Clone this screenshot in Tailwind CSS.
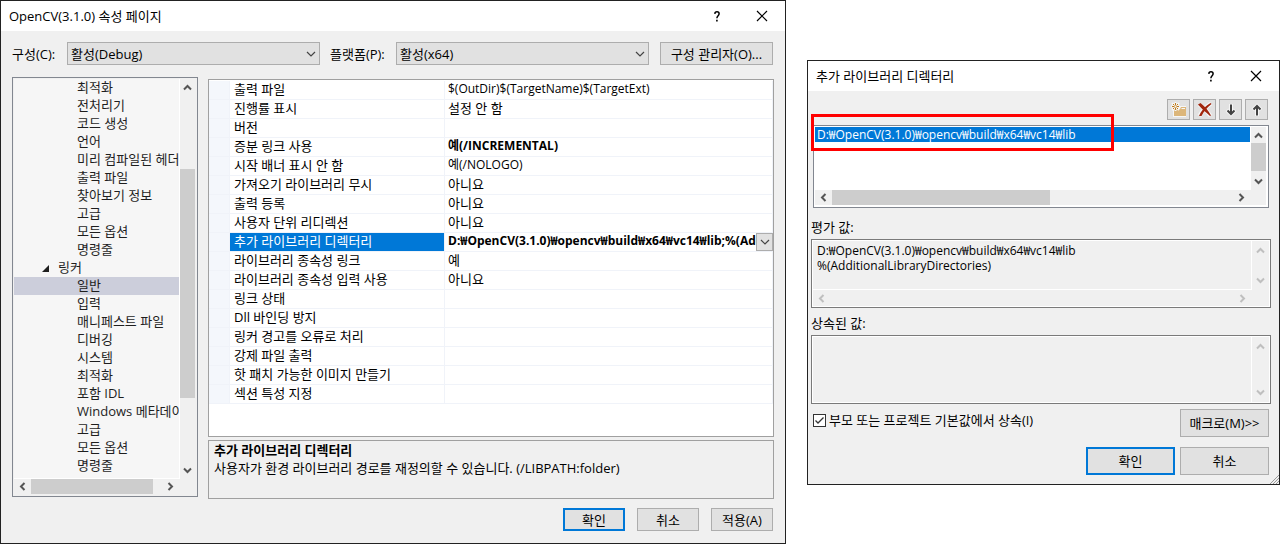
<!DOCTYPE html>
<html lang="ko">
<head>
    <meta charset="UTF-8">
    <meta name="viewport" content="width=device-width, initial-scale=1.0">
    <title>OpenCV(3.1.0) 속성 페이지</title>
    <script src="https://cdn.jsdelivr.net/npm/@tailwindcss/browser@4"></script>
</head>
<body class="bg-white text-black text-[13px] leading-[18px] font-['Open_Sans','Noto_Sans_CJK_KR',sans-serif]">

<!-- Shared icons -->
<svg class="hidden">
    <symbol id="up" viewBox="0 0 9 9"><path d="M1 6.5 4.5 3 8 6.5" fill="none" stroke="currentColor" stroke-width="2"/></symbol>
    <symbol id="down" viewBox="0 0 9 9"><path d="M1 2.5 4.5 6 8 2.5" fill="none" stroke="currentColor" stroke-width="2"/></symbol>
    <symbol id="left" viewBox="0 0 9 9"><path d="M6.5 1 3 4.5 6.5 8" fill="none" stroke="currentColor" stroke-width="2"/></symbol>
    <symbol id="right" viewBox="0 0 9 9"><path d="M2.5 1 6 4.5 2.5 8" fill="none" stroke="currentColor" stroke-width="2"/></symbol>
    <symbol id="chevron" viewBox="0 0 10 6"><path d="M1 1 5 5 9 1" fill="none" stroke="currentColor" stroke-width="1.2"/></symbol>
    <symbol id="close" viewBox="0 0 12 12"><path d="M1 1 11 11M11 1 1 11" fill="none" stroke="currentColor" stroke-width="1.2"/></symbol>
    <symbol id="help" viewBox="0 0 6 11"><path d="M.8 2.9C.9 1.5 1.7.8 3 .8s2.1.8 2.1 2c0 1.9-2.2 2-2.2 4.4" fill="none" stroke="currentColor" stroke-width="1.5"/><path d="M2.1 8.8h1.6v1.6H2.1z" fill="currentColor"/></symbol>
</svg>

<div class="grid grid-cols-[786fr_473fr] gap-[21px] items-start">

    <!-- Property pages window -->
    <main class="border border-[#222] bg-[#f0f0f0] min-w-0">
        <header class="flex items-center h-[30px] bg-white pl-2 pr-[17px]">
            <h1 class="grow">OpenCV(3.1.0) 속성 페이지</h1>
            <button aria-label="도움말" class="mr-[36px]"><svg class="w-[6px] h-[11px]"><use href="#help"/></svg></button>
            <button aria-label="닫기"><svg class="w-3 h-3"><use href="#close"/></svg></button>
        </header>

        <div class="flex items-center pt-[11px] pl-[11px] pr-3">
            <label for="config" class="w-[55px] shrink-0">구성(C):</label>
            <div class="relative flex-1 min-w-0">
                <select id="config" class="appearance-none w-full h-[23px] border border-[#adadad] bg-[#e1e1e1] pl-[3px]">
                    <option>활성(Debug)</option>
                </select>
                <svg class="absolute right-1 top-[9px] w-[10px] h-[6px] text-[#444] pointer-events-none"><use href="#chevron"/></svg>
            </div>
            <label for="platform" class="w-[66px] shrink-0 ml-[10px]">플랫폼(P):</label>
            <div class="relative flex-1 min-w-0">
                <select id="platform" class="appearance-none w-full h-[23px] border border-[#adadad] bg-[#e1e1e1] pl-[3px]">
                    <option>활성(x64)</option>
                </select>
                <svg class="absolute right-1 top-[9px] w-[10px] h-[6px] text-[#444] pointer-events-none"><use href="#chevron"/></svg>
            </div>
            <button class="w-[113px] h-[23px] shrink-0 ml-[11px] border border-[#adadad] bg-[#e1e1e1] leading-[20px]">구성 관리자(O)...</button>
        </div>

        <div class="flex gap-[10px] pt-3 pl-[11px] pr-[11px]">
            <!-- Category tree -->
            <nav class="w-[186px] h-[420px] shrink-0 border border-[#828790] p-px pb-[2px] flex flex-col">
                <div class="flex h-[400px]">
                    <ul class="w-[165px] overflow-hidden whitespace-nowrap bg-[#f6f6f6] text-[#1e1e1e] border-b border-white leading-4 [&>li]:h-[18px]">
                        <li class="pl-[63px]">최적화</li>
                        <li class="pl-[63px]">전처리기</li>
                        <li class="pl-[63px]">코드 생성</li>
                        <li class="pl-[63px]">언어</li>
                        <li class="pl-[63px]">미리 컴파일된 헤더</li>
                        <li class="pl-[63px]">출력 파일</li>
                        <li class="pl-[63px]">찾아보기 정보</li>
                        <li class="pl-[63px]">고급</li>
                        <li class="pl-[63px]">모든 옵션</li>
                        <li class="pl-[63px]">명령줄</li>
                        <li class="flex pl-7"><svg class="w-[7px] h-[7px] mt-[6px] mr-[9px]" viewBox="0 0 7 7"><path d="M7 0v7H0z" fill="#1e1e1e"/></svg>링커</li>
                        <li class="pl-[63px] bg-[#cccedb]">일반</li>
                        <li class="pl-[63px]">입력</li>
                        <li class="pl-[63px]">매니페스트 파일</li>
                        <li class="pl-[63px]">디버깅</li>
                        <li class="pl-[63px]">시스템</li>
                        <li class="pl-[63px]">최적화</li>
                        <li class="pl-[63px]">포함 IDL</li>
                        <li class="pl-[63px]">Windows 메타데이터</li>
                        <li class="pl-[63px]">고급</li>
                        <li class="pl-[63px]">모든 옵션</li>
                        <li class="pl-[63px]">명령줄</li>
                    </ul>
                    <div class="w-[16px] border-l border-white flex flex-col items-center text-[#555]">
                        <svg class="w-[9px] h-[9px] my-1 shrink-0"><use href="#up"/></svg>
                        <div class="w-full h-[229px] mt-[73px] bg-[#cdcdcd]"></div>
                        <svg class="w-[9px] h-[9px] mt-auto mb-1 shrink-0"><use href="#down"/></svg>
                    </div>
                </div>
                <div class="flex items-center h-[15px] w-[165px] text-[#555]">
                    <svg class="w-[9px] h-[9px] mx-1"><use href="#left"/></svg>
                    <div class="w-[122px] h-full bg-[#cdcdcd]"></div>
                    <svg class="w-[9px] h-[9px] ml-auto mr-1"><use href="#right"/></svg>
                </div>
            </nav>

            <div class="grow min-w-0 pt-[2px]">
                <!-- Property grid -->
                <div class="h-[358px] border border-[#a0a0a0] bg-white pt-px">
                    <table class="w-full table-fixed border-collapse leading-4">
                        <colgroup><col class="w-[21px]"><col class="w-[215px]"><col></colgroup>
                        <tbody class="[&_td]:h-[19px] [&_td]:p-0 [&_td]:pl-1 [&_td:last-child]:pl-[3px] [&_td]:align-top [&_td]:whitespace-nowrap [&_td]:overflow-hidden [&_td]:shadow-[inset_-1px_-1px_#f0f3f9] [&_td:first-child]:bg-[#f4f7fc]">
                            <tr><td></td><td>출력 파일</td><td class="text-[12px]">$(OutDir)$(TargetName)$(TargetExt)</td></tr>
                            <tr><td></td><td>진행률 표시</td><td>설정 안 함</td></tr>
                            <tr><td></td><td>버전</td><td></td></tr>
                            <tr><td></td><td>증분 링크 사용</td><td class="text-[12px] font-bold">예(/INCREMENTAL)</td></tr>
                            <tr><td></td><td>시작 배너 표시 안 함</td><td class="text-[12px]">예(/NOLOGO)</td></tr>
                            <tr><td></td><td>가져오기 라이브러리 무시</td><td>아니요</td></tr>
                            <tr><td></td><td>출력 등록</td><td>아니요</td></tr>
                            <tr><td></td><td>사용자 단위 리디렉션</td><td>아니요</td></tr>
                            <tr><td></td><td class="bg-[#0078d7] text-white">추가 라이브러리 디렉터리</td><td>
                                <div class="flex h-[18px]">
                                    <span class="grow min-w-0 overflow-hidden text-[12px] font-bold">D:₩OpenCV(3.1.0)₩opencv₩build₩x64₩vc14₩lib;%(AdditionalLibraryDirectories)</span>
                                    <button aria-label="편집" class="w-[17px] h-[18px] shrink-0 border border-[#adadad] bg-[#e1e1e1] flex items-center justify-center text-[#444]"><svg class="w-[10px] h-[6px]"><use href="#chevron"/></svg></button>
                                </div>
                            </td></tr>
                            <tr><td></td><td>라이브러리 종속성 링크</td><td>예</td></tr>
                            <tr><td></td><td>라이브러리 종속성 입력 사용</td><td>아니요</td></tr>
                            <tr><td></td><td>링크 상태</td><td></td></tr>
                            <tr><td></td><td>Dll 바인딩 방지</td><td></td></tr>
                            <tr><td></td><td>링커 경고를 오류로 처리</td><td></td></tr>
                            <tr><td></td><td>강제 파일 출력</td><td></td></tr>
                            <tr><td></td><td>핫 패치 가능한 이미지 만들기</td><td></td></tr>
                            <tr><td></td><td>섹션 특성 지정</td><td></td></tr>
                        </tbody>
                    </table>
                </div>

                <!-- Description -->
                <section class="h-[59px] mt-[3px] border border-[#a0a0a0] pl-[5px]">
                    <h2 class="font-bold">추가 라이브러리 디렉터리</h2>
                    <p>사용자가 환경 라이브러리 경로를 재정의할 수 있습니다. (/LIBPATH:folder)</p>
                </section>
            </div>
        </div>

        <footer class="flex justify-end gap-3 pt-[9px] pr-3 pb-3 leading-[20px]">
            <button class="w-[62px] h-[23px] border-2 border-[#0078d7] bg-[#e1e1e1] leading-[18px]">확인</button>
            <button class="w-[62px] h-[23px] border border-[#adadad] bg-[#e1e1e1]">취소</button>
            <button class="w-[62px] h-[23px] border border-[#adadad] bg-[#e1e1e1]">적용(A)</button>
        </footer>
    </main>

    <!-- Additional library directories dialog -->
    <section class="relative mt-[60px] border border-[#222] bg-[#f0f0f0] min-w-0">
        <header class="flex items-center h-[30px] bg-white pl-2 pr-[17px]">
            <h2 class="grow">추가 라이브러리 디렉터리</h2>
            <button aria-label="도움말" class="mr-[36px]"><svg class="w-[6px] h-[11px]"><use href="#help"/></svg></button>
            <button aria-label="닫기"><svg class="w-3 h-3"><use href="#close"/></svg></button>
        </header>

        <div class="flex justify-end gap-[3px] pt-2 pr-[11px]">
            <button aria-label="새 줄" class="w-[23px] h-[21px] border border-[#adadad] bg-[#e1e1e1] flex items-center justify-center">
                <svg class="w-4 h-4 shrink-0" viewBox="0 0 16 16">
                    <path d="M2 6h6l1-2h6v11H2z" fill="#f6f6f6"/>
                    <path d="M3 7h6l1-2h5v9H3z" fill="#dcb67a"/>
                    <path d="M10.500 6.500H14" stroke="#f6f6f6"/>
                    <path d="M4.500 0v9M0 4.500h9M1 1l7 7M8 1 1 8" stroke="#f6f6f6" stroke-width="2"/>
                    <path d="M4.500 1v2.500M4.500 5.500V8M1 4.500h2.500M5.500 4.500H8M2 2l1.500 1.500M5.500 5.500 7 7M7 2 5.500 3.500M3.500 5.500 2 7" stroke="#c27d1a"/>
                </svg>
            </button>
            <button aria-label="삭제" class="w-[23px] h-[21px] border border-[#adadad] bg-[#e1e1e1] flex items-center justify-center">
                <svg class="w-4 h-4 shrink-0" viewBox="0 0 16 16">
                    <path d="M2 2.500C6 5 10 9 13.500 14M14 1.500C10 4 5 9 2.500 14" fill="none" stroke="#f6f6f6" stroke-width="4"/>
                    <path d="M1 2.500 3.500 1C8 4.500 11 8 14 13.500L13 14C9 10.500 5 7 1 2.500zM13.500 1 14.500 2C10 5.500 7 9 4.500 14H2C4 9 8.500 4 13.500 1z" fill="#a1260d"/>
                </svg>
            </button>
            <button aria-label="아래로" class="w-[23px] h-[21px] border border-[#adadad] bg-[#e1e1e1] flex items-center justify-center">
                <svg class="w-4 h-4 shrink-0" viewBox="0 0 16 16" fill="none"><path d="M8 2v10M4 8l4 4 4-4" stroke="#f6f6f6" stroke-width="4"/><path d="M8 2.500V12M4.500 8.500 8 12l3.500-3.500" stroke="#424242" stroke-width="2"/></svg>
            </button>
            <button aria-label="위로" class="w-[23px] h-[21px] border border-[#adadad] bg-[#e1e1e1] flex items-center justify-center">
                <svg class="w-4 h-4 shrink-0" viewBox="0 0 16 16" fill="none"><path d="M8 14V4M4 8l4-4 4 4" stroke="#f6f6f6" stroke-width="4"/><path d="M8 13.500V4M4.500 7.500 8 4l3.500 3.500" stroke="#424242" stroke-width="2"/></svg>
            </button>
        </div>

        <!-- Directory list -->
        <div class="mt-[5px] ml-[5px] mr-[10px] h-[83px] border border-[#828790] bg-white p-px pr-[2px]">
            <div class="flex h-[63px]">
                <ul class="grow min-w-0 text-[12px] leading-[15px]">
                    <li class="bg-[#0078d7] text-white pl-[2px] h-[15px]">D:₩OpenCV(3.1.0)₩opencv₩build₩x64₩vc14₩lib</li>
                </ul>
                <div class="w-[16px] bg-[#f0f0f0] border-l border-white flex flex-col items-center text-[#555]">
                    <svg class="w-[9px] h-[9px] mt-1 mb-[3px] shrink-0"><use href="#up"/></svg>
                    <div class="w-full h-7 bg-[#cdcdcd]"></div>
                    <svg class="w-[9px] h-[9px] mt-auto mb-1 shrink-0"><use href="#down"/></svg>
                </div>
            </div>
            <div class="flex items-center h-[15px] bg-[#f0f0f0] text-[#555]">
                <svg class="w-[9px] h-[9px] mx-1"><use href="#left"/></svg>
                <div class="w-[218px] h-full bg-[#cdcdcd]"></div>
                <svg class="w-[9px] h-[9px] ml-auto mr-5"><use href="#right"/></svg>
            </div>
        </div>

        <div class="pl-[3px] pr-2">
            <label for="evaluated" class="block pt-[10px] pb-[3px]">평가 값:</label>
            <div class="h-[69px] border border-[#7a7a7a] outline outline-1 outline-white -outline-offset-2 p-px">
                <div class="flex h-[48px]">
                    <textarea id="evaluated" readonly class="grow min-w-0 resize-none overflow-hidden whitespace-pre pl-1 pt-[2px] text-[12px] leading-[15px] outline-none">D:₩OpenCV(3.1.0)₩opencv₩build₩x64₩vc14₩lib
%(AdditionalLibraryDirectories)</textarea>
                    <div class="w-[18px] border-l border-white flex flex-col items-center justify-between pt-[5px] pb-1 text-[#bfbfbf]">
                        <svg class="w-[9px] h-[9px]"><use href="#up"/></svg>
                        <svg class="w-[9px] h-[9px]"><use href="#down"/></svg>
                    </div>
                </div>
                <div class="flex items-center justify-between h-[17px] mr-[17px] border-t border-white pl-1 pr-[5px] text-[#bfbfbf]">
                    <svg class="w-[9px] h-[9px]"><use href="#left"/></svg>
                    <svg class="w-[9px] h-[9px]"><use href="#right"/></svg>
                </div>
            </div>

            <label for="inherited" class="block pt-[6px] pb-[3px]">상속된 값:</label>
            <div class="flex h-[69px] border border-[#7a7a7a] outline outline-1 outline-white -outline-offset-2 p-px">
                <textarea id="inherited" readonly class="grow min-w-0 resize-none outline-none"></textarea>
                <div class="w-[18px] border-l border-white flex flex-col items-center justify-between pt-[5px] pb-[5px] text-[#bfbfbf]">
                    <svg class="w-[9px] h-[9px]"><use href="#up"/></svg>
                    <svg class="w-[9px] h-[9px]"><use href="#down"/></svg>
                </div>
            </div>
        </div>

        <div class="flex justify-between pt-[5px] pl-[5px] pr-[10px]">
            <label class="flex items-center h-[22px] gap-[3px]">
                <span class="relative flex">
                    <input type="checkbox" checked class="peer appearance-none w-[13px] h-[13px] border border-[#333] bg-white">
                    <svg class="absolute inset-0 w-[13px] h-[13px] hidden peer-checked:block pointer-events-none" viewBox="0 0 13 13"><path d="M2.500 6.500 5 9l5.500-5.500" fill="none" stroke="#333" stroke-width="1.300"/></svg>
                </span>
                부모 또는 프로젝트 기본값에서 상속(I)
            </label>
            <button class="w-[89px] h-7 border border-[#adadad] bg-[#e1e1e1]">매크로(M)&gt;&gt;</button>
        </div>
        <footer class="flex justify-end gap-[5px] pt-[10px] pr-[10px] pb-[9px]">
            <button class="w-[89px] h-7 border-2 border-[#0078d7] bg-[#e1e1e1]">확인</button>
            <button class="w-[89px] h-7 border border-[#adadad] bg-[#e1e1e1]">취소</button>
        </footer>

        <svg class="absolute right-0 bottom-0 w-[9px] h-[9px]" viewBox="0 0 9 9"><path d="M0 9 9 0M3 9 9 3M6 9 9 6" stroke="#999"/></svg>
        <!-- Highlight around the added path -->
        <div class="absolute left-[3px] top-[53px] w-[303px] h-[37px] border-3 border-[#f00] pointer-events-none"></div>
    </section>
</div>

</body>
</html>
